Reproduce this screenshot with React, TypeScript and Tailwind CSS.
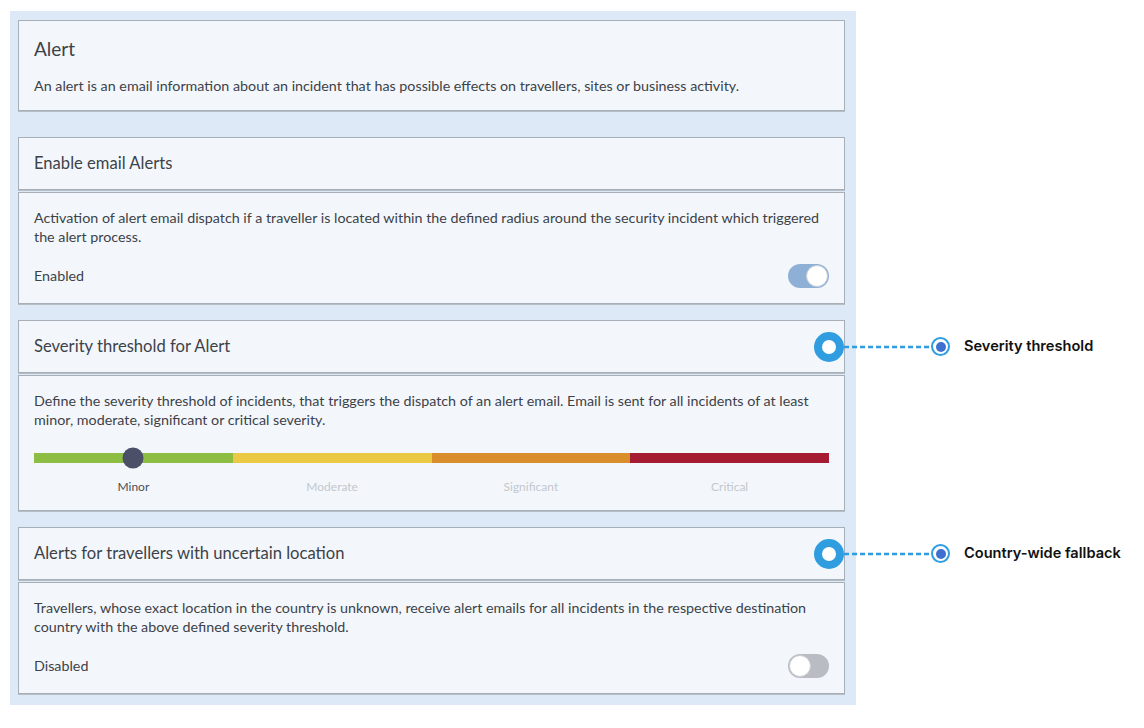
import React from 'react'

const font = { fontFamily: 'Lato, "Noto Sans", sans-serif' }

const Toggle = ({ on }: { on: boolean }) => {
  return (
    <div
      className={
        on
          ? 'w-[41px] h-[24px] rounded-full bg-[#8fb0d6] flex items-center justify-end p-[1px]'
          : 'w-[41px] h-[24px] rounded-full bg-[#b9bdc3] flex items-center justify-start p-[1px]'
      }
    >
      <div className="w-[22px] h-[22px] rounded-full bg-white border border-[#c9ced4]" />
    </div>
  )
}

// callout drawn over the right edge of a section header
const Marker = ({ label }: { label: string }) => {
  return (
    <div className="absolute left-[795px] top-1/2 -translate-y-1/2 flex items-center pointer-events-none">
      <div className="w-[30px] h-[30px] rounded-full border-[8px] border-[#2f9de0] bg-white shrink-0" />
      <svg width="87" height="4" className="shrink-0">
        <line x1="0" y1="2" x2="87" y2="2" stroke="#2f9de0" strokeWidth="2.5" strokeDasharray="5 3" />
      </svg>
      <div className="w-[19px] h-[19px] rounded-full border-2 border-[#2f9de0] bg-white flex items-center justify-center shrink-0">
        <div className="w-[10px] h-[10px] rounded-full bg-[#3f6fcf]" />
      </div>
      <span
        className="ml-[14px] text-[14.6px] font-semibold text-[#111] whitespace-nowrap"
        style={{ fontFamily: 'Inter, Lato, sans-serif' }}
      >
        {label}
      </span>
    </div>
  )
}

const Header = ({ title, marker }: { title: string; marker?: string }) => {
  return (
    <div className="relative h-[53px] bg-[#f3f7fc] border border-[#a7afb8] shadow-[0_1px_0_#b6bdc5] flex items-center px-[15px]">
      <span className="text-[16.6px] text-[#3d4248]">{title}</span>
      {marker && <Marker label={marker} />}
    </div>
  )
}

const Body = ({ children }: { children: React.ReactNode }) => {
  return (
    <div className="bg-[#f3f7fc] border border-[#a7afb8] shadow-[0_1px_0_#b6bdc5] px-[15px] pt-[15px] pb-[15px]">
      {children}
    </div>
  )
}

const segments = [
  { label: 'Minor', color: 'bg-[#8dbd43]', text: 'text-[#4a4f55]' },
  { label: 'Moderate', color: 'bg-[#ebc945]', text: 'text-[#c3c7cc]' },
  { label: 'Significant', color: 'bg-[#d98e2b]', text: 'text-[#c3c7cc]' },
  { label: 'Critical', color: 'bg-[#a51c32]', text: 'text-[#c3c7cc]' },
]

export default function App() {
  return (
    <div className="w-[1144px] h-[728px] bg-white pt-[11px] pl-[10px]" style={font}>
      <div className="w-[846px] bg-[#dde9f7] pt-[9px] pl-[8px] pr-[11px] pb-[11px] flex flex-col">
        <div className="bg-[#f3f7fc] border border-[#a7afb8] shadow-[0_1px_0_#b6bdc5] px-[15px] pt-[14px] pb-[14px]">
          <div className="text-[19px] leading-[28px] text-[#3d4248]">Alert</div>
          <div className="mt-[13px] text-[14.3px] leading-[20px] text-[#3d4248]">
            An alert is an email information about an incident that has possible effects on travellers, sites or business activity.
          </div>
        </div>

        <div className="mt-[26px] flex flex-col gap-[2px]">
          <Header title="Enable email Alerts" />
          <Body>
            <div className="text-[14.3px] leading-[19px] text-[#3d4248]">
              Activation of alert email dispatch if a traveller is located within the defined radius around the security incident which triggered the alert process.
            </div>
            <div className="mt-[18px] flex items-center justify-between">
              <span className="text-[14.3px] text-[#3d4248]">Enabled</span>
              <Toggle on={true} />
            </div>
          </Body>
        </div>

        <div className="mt-[16px] flex flex-col gap-[2px]">
          <Header title="Severity threshold for Alert" marker="Severity threshold" />
          <Body>
            <div className="text-[14.3px] leading-[19px] text-[#3d4248]">
              Define the severity threshold of incidents, that triggers the dispatch of an alert email. Email is sent for all incidents of at least minor, moderate, significant or critical severity.
            </div>
            <div className="relative mt-[24px] flex h-[10px]">
              {segments.map((s) => (
                <div key={s.label} className={`flex-1 h-full ${s.color}`} />
              ))}
              <div className="absolute left-[12.5%] top-1/2 -translate-x-1/2 -translate-y-1/2 w-[21px] h-[21px] rounded-full bg-[#4b5068]" />
            </div>
            <div className="flex mt-[16px]">
              {segments.map((s) => (
                <div key={s.label} className={`flex-1 text-center text-[12px] leading-[16px] ${s.text}`}>
                  {s.label}
                </div>
              ))}
            </div>
          </Body>
        </div>

        <div className="mt-[16px] flex flex-col gap-[2px]">
          <Header title="Alerts for travellers with uncertain location" marker="Country-wide fallback" />
          <Body>
            <div className="text-[14.3px] leading-[19px] text-[#3d4248]">
              Travellers, whose exact location in the country is unknown, receive alert emails for all incidents in the respective destination country with the above defined severity threshold.
            </div>
            <div className="mt-[18px] flex items-center justify-between">
              <span className="text-[14.3px] text-[#3d4248]">Disabled</span>
              <Toggle on={false} />
            </div>
          </Body>
        </div>
      </div>
    </div>
  )
}
